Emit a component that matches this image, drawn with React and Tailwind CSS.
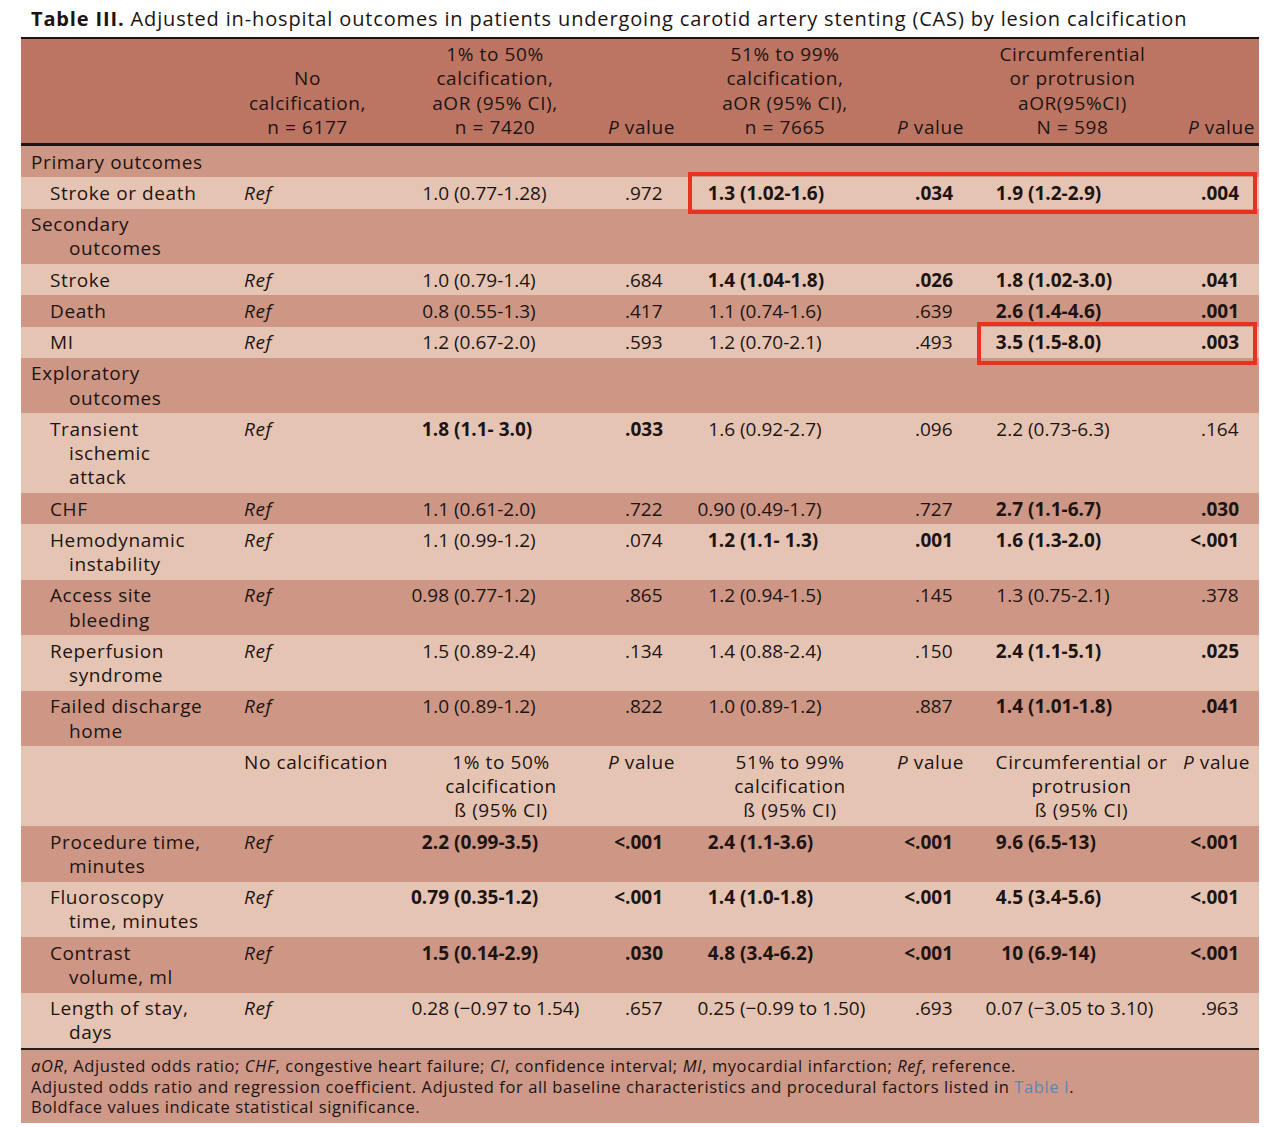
import React from "react";

const DARK = "bg-[#cd9685]";
const LIGHT = "bg-[#e6c4b4]";

const rows = [
  { cat: true, lines: ["Primary outcomes"] },
  { lines: ["Stroke or death"], d: [["1.0 (0.77-1.28)"], [".972"], ["1.3 (1.02-1.6)", 1], [".034", 1], ["1.9 (1.2-2.9)", 1], [".004", 1]] },
  { cat: true, lines: ["Secondary", "outcomes"] },
  { lines: ["Stroke"], d: [["1.0 (0.79-1.4)"], [".684"], ["1.4 (1.04-1.8)", 1], [".026", 1], ["1.8 (1.02-3.0)", 1], [".041", 1]] },
  { lines: ["Death"], d: [["0.8 (0.55-1.3)"], [".417"], ["1.1 (0.74-1.6)"], [".639"], ["2.6 (1.4-4.6)", 1], [".001", 1]] },
  { lines: ["MI"], d: [["1.2 (0.67-2.0)"], [".593"], ["1.2 (0.70-2.1)"], [".493"], ["3.5 (1.5-8.0)", 1], [".003", 1]] },
  { cat: true, lines: ["Exploratory", "outcomes"] },
  { lines: ["Transient", "ischemic", "attack"], d: [["1.8 (1.1- 3.0)", 1], [".033", 1], ["1.6 (0.92-2.7)"], [".096"], ["2.2 (0.73-6.3)"], [".164"]] },
  { lines: ["CHF"], d: [["1.1 (0.61-2.0)"], [".722"], ["0.90 (0.49-1.7)"], [".727"], ["2.7 (1.1-6.7)", 1], [".030", 1]] },
  { lines: ["Hemodynamic", "instability"], d: [["1.1 (0.99-1.2)"], [".074"], ["1.2 (1.1- 1.3)", 1], [".001", 1], ["1.6 (1.3-2.0)", 1], ["<.001", 1]] },
  { lines: ["Access site", "bleeding"], d: [["0.98 (0.77-1.2)"], [".865"], ["1.2 (0.94-1.5)"], [".145"], ["1.3 (0.75-2.1)"], [".378"]] },
  { lines: ["Reperfusion", "syndrome"], d: [["1.5 (0.89-2.4)"], [".134"], ["1.4 (0.88-2.4)"], [".150"], ["2.4 (1.1-5.1)", 1], [".025", 1]] },
  { lines: ["Failed discharge", "home"], d: [["1.0 (0.89-1.2)"], [".822"], ["1.0 (0.89-1.2)"], [".887"], ["1.4 (1.01-1.8)", 1], [".041", 1]] },
  { sub: true },
  { lines: ["Procedure time,", "minutes"], d: [["2.2 (0.99-3.5)", 1], ["<.001", 1], ["2.4 (1.1-3.6)", 1], ["<.001", 1], ["9.6 (6.5-13)", 1], ["<.001", 1]] },
  { lines: ["Fluoroscopy", "time, minutes"], d: [["0.79 (0.35-1.2)", 1], ["<.001", 1], ["1.4 (1.0-1.8)", 1], ["<.001", 1], ["4.5 (3.4-5.6)", 1], ["<.001", 1]] },
  { lines: ["Contrast", "volume, ml"], d: [["1.5 (0.14-2.9)", 1], [".030", 1], ["4.8 (3.4-6.2)", 1], ["<.001", 1], ["10 (6.9-14)", 1], ["<.001", 1]] },
  { lines: ["Length of stay,", "days"], d: [["0.28 (\u22120.97 to 1.54)"], [".657"], ["0.25 (\u22120.99 to 1.50)"], [".693"], ["0.07 (\u22123.05 to 3.10)"], [".963"]] },
];

const GRID = "grid grid-cols-[214px_165px_190px_95px_200px_90px_195px_89px]";
const TXT = "tracking-[0.6px]";

function Val({ cell, preW }) {
  const [v, b] = cell;
  const i = v.indexOf(" ");
  const pre = v.slice(0, i);
  const rest = v.slice(i + 1);
  return (
    <div className={"whitespace-nowrap " + (b ? "font-bold" : "")}>
      <span className={"inline-block text-right " + preW}>{pre}</span>
      <span className="pl-[5px]">{rest}</span>
    </div>
  );
}

function PVal({ cell, preW }) {
  const [v, b] = cell;
  const lt = v.startsWith("<");
  return (
    <div className={"whitespace-nowrap " + (b ? "font-bold" : "")}>
      <span className={"inline-block text-right " + preW}>{lt ? "<" : ""}</span>
      <span>{lt ? v.slice(1) : v}</span>
    </div>
  );
}

function Label({ lines, cat }) {
  return (
    <div className={"whitespace-nowrap " + TXT}>
      {lines.map((l, i) => (
        <div key={i} className={i === 0 ? (cat ? "pl-[10px]" : "pl-[29px]") : "pl-[48px]"}>
          {l}
        </div>
      ))}
    </div>
  );
}

function PHead({ cls }) {
  return (
    <div className={"text-right whitespace-nowrap " + TXT + " " + cls}>
      <i>P</i> value
    </div>
  );
}

export default function App() {
  return (
    <div className="w-[1280px] h-[1127px] bg-white text-[#1c1412] font-['Open_Sans',sans-serif] relative">
      <div className="pl-[31px] pt-[5px] h-[37px] text-[20px] leading-[28px] tracking-[0.85px] whitespace-nowrap">
        <span className="font-bold">Table III.</span> Adjusted in-hospital outcomes in patients undergoing carotid artery stenting (CAS) by lesion calcification
      </div>
      <div className="ml-[21px] w-[1238px] text-[19px] leading-[24.25px]">
        {/* header */}
        <div className={GRID + " bg-[#bc7463] border-t-2 border-b-[3px] border-[#1d1513] pt-[3px] pb-[4px] items-end " + TXT}>
          <div />
          <div className="text-center pr-[20px]">
            No
            <br />
            calcification,
            <br />
            n = 6177
          </div>
          <div className="text-center">
            1% to 50%
            <br />
            calcification,
            <br />
            aOR (95% CI),
            <br />
            n = 7420
          </div>
          <PHead cls="pr-[10px]" />
          <div className="text-center">
            51% to 99%
            <br />
            calcification,
            <br />
            aOR (95% CI),
            <br />
            n = 7665
          </div>
          <PHead cls="pr-[11px]" />
          <div className="text-center">
            Circumferential
            <br />
            or protrusion
            <br />
            aOR(95%CI)
            <br />
            N = 598
          </div>
          <PHead cls="pr-[4px]" />
        </div>
        {/* body */}
        {rows.map((r, idx) => {
          const bg = idx % 2 === 0 ? DARK : LIGHT;
          if (r.sub) {
            return (
              <div key={idx} className={GRID + " " + bg + " pt-[3.5px] pb-[3.5px] " + TXT}>
                <div />
                <div className="pl-[9px] whitespace-nowrap">No calcification</div>
                <div className="text-center pl-[12px]">
                  1% to 50%
                  <br />
                  calcification
                  <br />
                  ß (95% CI)
                </div>
                <PHead cls="pr-[10px]" />
                <div className="text-center pl-[10px]">
                  51% to 99%
                  <br />
                  calcification
                  <br />
                  ß (95% CI)
                </div>
                <PHead cls="pr-[11px]" />
                <div className="text-center pl-[18px] whitespace-nowrap">
                  Circumferential or
                  <br />
                  protrusion
                  <br />
                  ß (95% CI)
                </div>
                <PHead cls="pr-[9px]" />
              </div>
            );
          }
          return (
            <div key={idx} className={GRID + " " + bg + " pt-[3.5px] pb-[3.5px]"}>
              <Label lines={r.lines} cat={r.cat} />
              {r.d ? (
                <>
                  <div className={"pl-[9px] italic " + TXT}>Ref</div>
                  <Val cell={r.d[0]} preW="w-[49px]" />
                  <PVal cell={r.d[1]} preW="w-[35px]" />
                  <Val cell={r.d[2]} preW="w-[50px]" />
                  <PVal cell={r.d[3]} preW="w-[30px]" />
                  <Val cell={r.d[4]} preW="w-[48px]" />
                  <PVal cell={r.d[5]} preW="w-[31px]" />
                </>
              ) : null}
            </div>
          );
        })}
        {/* footer */}
        <div className="bg-[#cf9989] border-t-2 border-[#2a1c18] pl-[10px] pt-[6px] pb-[5px] text-[16.5px] leading-[20.5px] tracking-[0.6px]">
          <div>
            <i>aOR</i>, Adjusted odds ratio; <i>CHF</i>, congestive heart failure; <i>CI</i>, confidence interval; <i>MI</i>, myocardial infarction; <i>Ref</i>, reference.
          </div>
          <div>
            Adjusted odds ratio and regression coefficient. Adjusted for all baseline characteristics and procedural factors listed in{" "}
            <span className="text-[#5a88b4]">Table I</span>.
          </div>
          <div>Boldface values indicate statistical significance.</div>
        </div>
      </div>
      {/* highlight boxes */}
      <div className="absolute left-[688px] top-[172px] w-[569px] h-[42px] border-4 border-[#e6321f]" />
      <div className="absolute left-[977px] top-[322px] w-[280px] h-[43px] border-4 border-[#e6321f]" />
    </div>
  );
}
